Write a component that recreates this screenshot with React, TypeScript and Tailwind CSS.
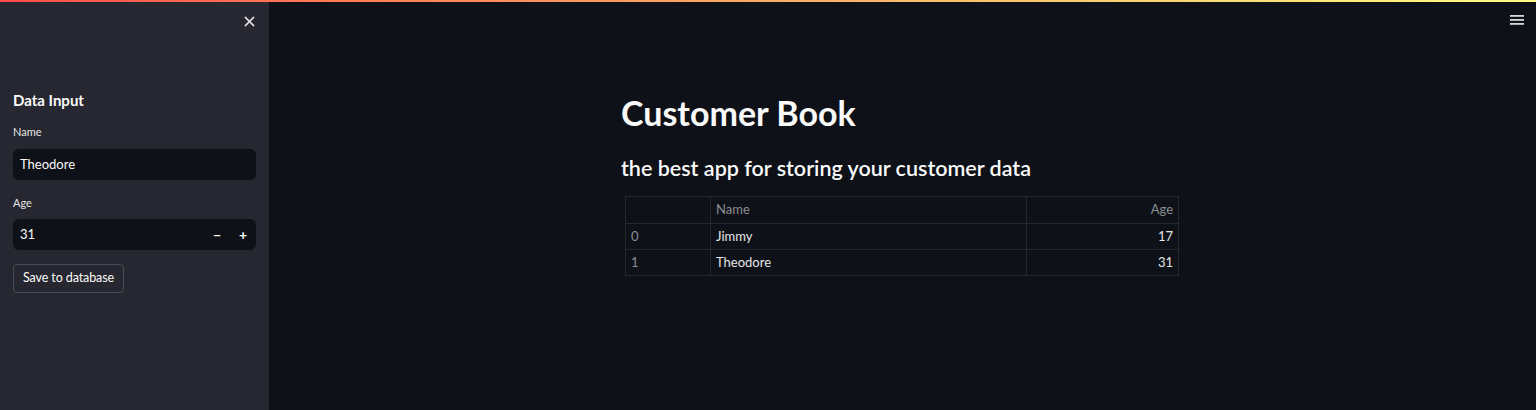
import React from "react";

const rows = [
  { idx: 0, name: "Jimmy", age: 17 },
  { idx: 1, name: "Theodore", age: 31 },
];

export default function App() {
  return (
    <div
      className="relative flex h-[410px] w-full overflow-hidden bg-[#0e1117] text-[#fafafa]"
      style={{ fontFamily: "Lato, 'Noto Sans', sans-serif" }}
    >
      {/* top decoration */}
      <div className="absolute left-0 right-0 top-0 z-10 h-[2px] bg-gradient-to-r from-[#ff4b4b] to-[#fffd80]" />

      {/* Sidebar */}
      <aside className="flex w-[269px] shrink-0 flex-col bg-[#262730] px-[13px]">
        <div className="flex h-[40px] items-center justify-end pr-[1px] pt-[2px]">
          <button className="text-[#e6e6e6]">
            <svg width="11" height="11" viewBox="0 0 12 12" fill="none" stroke="currentColor" strokeWidth="1.6" strokeLinecap="round">
              <path d="M1.5 1.5l9 9M10.5 1.5l-9 9" />
            </svg>
          </button>
        </div>
        <h3 className="mt-[50px] text-[15px] font-bold leading-[20px]">Data Input</h3>
        <label className="mt-[15px] text-[11px] leading-[14px] text-[#e6e6e6]">Name</label>
        <div className="mt-[10px] flex h-[31px] items-center rounded-[6px] bg-[#0e1117] px-[7px] text-[13px]">
          Theodore
        </div>
        <label className="mt-[16px] text-[11px] leading-[14px] text-[#e6e6e6]">Age</label>
        <div className="mt-[9px] flex h-[31px] items-center rounded-[6px] bg-[#0e1117] pl-[7px] text-[13px]">
          <span className="flex-1">31</span>
          <span className="flex w-[26px] justify-center text-[14px] font-bold">−</span>
          <span className="flex w-[26px] justify-center text-[14px] font-bold">+</span>
        </div>
        <div className="mt-[14px]">
          <button className="h-[29px] rounded-[4px] border border-[#4a4c55] bg-[#262730] px-[9px] text-[12.5px] tracking-[-0.1px] text-[#fafafa]">
            Save to database
          </button>
        </div>
      </aside>

      {/* Main */}
      <main className="relative flex-1">
        <button className="absolute right-[12px] top-[14px] text-[#d6d6d6]">
          <svg width="14" height="12" viewBox="0 0 14 12" fill="currentColor">
            <rect x="0" y="1" width="14" height="1.8" />
            <rect x="0" y="5" width="14" height="1.8" />
            <rect x="0" y="9" width="14" height="1.8" />
          </svg>
        </button>
        <div className="ml-[352px] w-[558px] pt-[92px]">
          <h1 className="text-[34px] font-bold leading-[42px]">Customer Book</h1>
          <h2 className="mt-[20px] text-[21.5px] font-semibold leading-[28px]">
            the best app for storing your customer data
          </h2>
          <table className="ml-[4px] mt-[14px] w-[554px] border-collapse text-[13px]">
            <thead>
              <tr className="h-[27px]">
                <th className="w-[85px] border border-[#262730]" />
                <th className="w-[316px] border border-[#262730] px-[5px] text-left font-normal text-[#8b8d93]">Name</th>
                <th className="border border-[#262730] px-[5px] text-right font-normal text-[#8b8d93]">Age</th>
              </tr>
            </thead>
            <tbody>
              {rows.map((r) => (
                <tr key={r.idx} className="h-[26px]">
                  <td className="border border-[#262730] px-[5px] text-[#8b8d93]">{r.idx}</td>
                  <td className="border border-[#262730] px-[5px] text-[#e6e6e6]">{r.name}</td>
                  <td className="border border-[#262730] px-[5px] text-right text-[#e6e6e6]">{r.age}</td>
                </tr>
              ))}
            </tbody>
          </table>
        </div>
      </main>
    </div>
  );
}
